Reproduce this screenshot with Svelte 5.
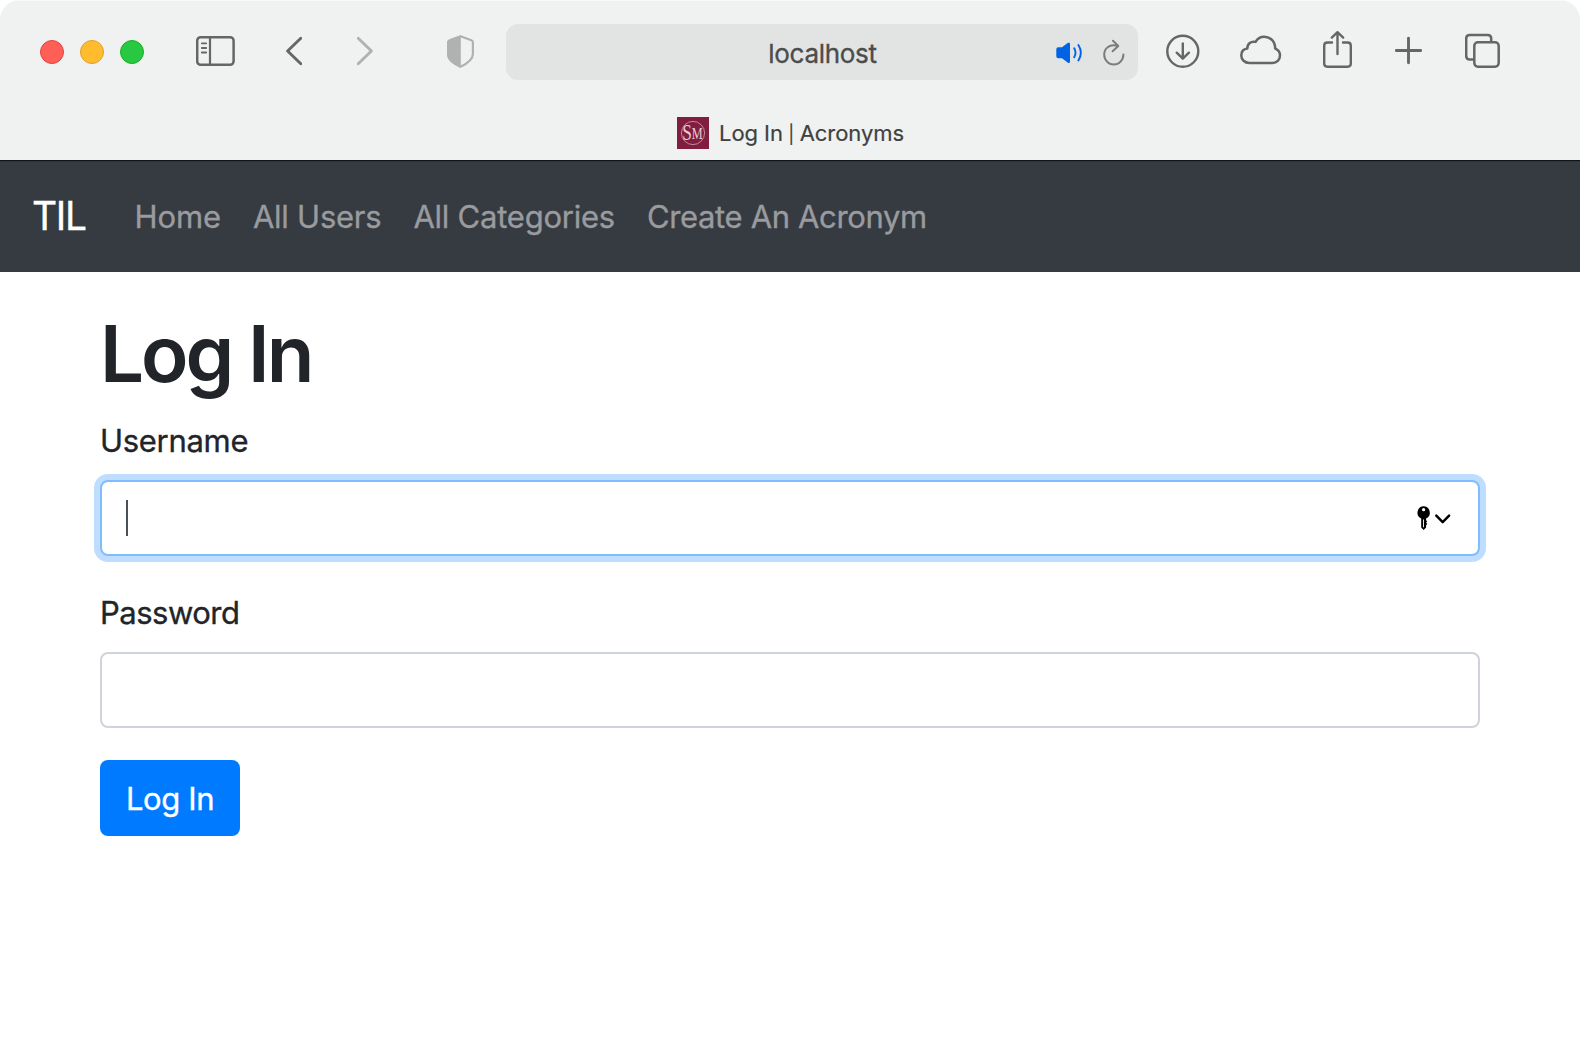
<script>
  const links = [
    { label: 'Home', cls: 'home' },
    { label: 'All Users', cls: 'users' },
    { label: 'All Categories', cls: 'categories' },
    { label: 'Create An Acronym', cls: 'create' }
  ];
</script>

<div class="window">
  <header class="chrome">
    <div class="toolbar">
      <div class="lights">
        <span class="light red"></span>
        <span class="light amber"></span>
        <span class="light green"></span>
      </div>
      <svg class="icon sidebar" width="39" height="48" viewBox="0 0 39 48">
        <rect x="1.2" y="9.2" width="36.4" height="27.6" rx="3.5" stroke-width="2.5" />
        <path d="M14 9v28" stroke-width="2.2" />
        <path d="M5.8 15.3h4.4M5.8 20h4.4M5.8 24.5h4.4" stroke-width="1.8" />
      </svg>
      <svg class="icon back" width="16" height="48" viewBox="0 0 16 48">
        <path d="M14.8 10.3 1.6 23 14.8 35.7" stroke-width="2.9" />
      </svg>
      <svg class="icon forward dim" width="16" height="48" viewBox="0 0 16 48">
        <path d="M1.2 10.3 14.4 23 1.2 35.7" stroke-width="2.9" />
      </svg>
      <svg class="icon shield dim" width="27" height="48" viewBox="0 0 27 48">
        <path d="M13.5 8.2 24.4 12.3Q25.9 12.9 25.9 14.3V26C25.9 32 20 35.7 13.5 38.7 7 35.7 1.1 32 1.1 26V14.3Q1.1 12.9 2.6 12.3Z" stroke-width="2.2" />
        <path class="solid" d="M13.8 7.5 2 12Q0 12.8 0 14.6V26C0 33 7 36.8 13.8 39.8Z" />
      </svg>
      <div class="address">
        <span class="host">localhost</span>
        <div class="address-icons">
          <svg class="speaker" width="27" height="48" viewBox="0 0 27 48">
            <path class="cone" d="M2.3 19.2H6L11.6 14.9Q14 13.5 14 16V33.5Q14 36 11.6 34.6L6 30.3H2.3Q.3 30.3.3 28.3V21.2Q.3 19.2 2.3 19.2Z" />
            <path d="M18.2 20.2Q20.8 24.7 18.2 29.2M22.4 17Q27.3 24.7 22.4 32.4" />
          </svg>
          <svg class="icon reload" width="22" height="48" viewBox="0 0 22 48">
            <path d="M13.2 17.6C6.4 16.1 1.2 20.5 1.2 26.6A9.6 9.9 0 0 0 20.4 26.6M10 12.7 15.3 17.9 9.6 23.2" stroke-width="2" />
          </svg>
        </div>
      </div>
      <svg class="icon download" width="34" height="48" viewBox="0 0 34 48">
        <circle cx="16.8" cy="23.3" r="15.5" stroke-width="2.4" />
        <path d="M16.8 15.5V30.6M10.7 24.7 16.8 30.7 22.9 24.7" stroke-width="2.4" />
      </svg>
      <svg class="icon cloud" width="42" height="48" viewBox="0 0 42 48">
        <path d="M9.3 34.9C4.6 34.9 1.3 31.6 1.3 27.5 1.3 23.7 3.8 21 7.3 20.5 7.3 15.7 11 12.8 15.6 13.9 17.3 10.7 20.3 8.7 24.2 8.7 30.3 8.7 35.2 13.4 35.2 20.6 38.2 21.7 40 24.3 40 27.6 40 31.8 36.8 34.9 32.5 34.9Z" stroke-width="2.5" />
      </svg>
      <svg class="icon share" width="29" height="48" viewBox="0 0 29 48">
        <path d="M9 14.5H4.4Q1.2 14.5 1.2 17.7V35.5Q1.2 38.7 4.4 38.7H24.6Q27.8 38.7 27.8 35.5V17.7Q27.8 14.5 24.6 14.5H20M14.5 26V4.5M8.8 9.6 14.5 4.2 20.2 9.6" stroke-width="2.4" />
      </svg>
      <svg class="icon plus" width="27" height="48" viewBox="0 0 27 48">
        <path d="M13.5 10.3V34.7M1.3 22.5H25.7" stroke-width="2.9" />
      </svg>
      <svg class="icon tabs" width="35" height="48" viewBox="0 0 35 48">
        <path d="M8.5 31.4H4.7Q1.2 31.4 1.2 27.9V10.4Q1.2 6.9 4.7 6.9H22.7Q26.2 6.9 26.2 10.4V13.5" stroke-width="2.5" />
        <rect x="9.3" y="14.3" width="24.4" height="24.4" rx="3.6" stroke-width="2.5" />
      </svg>
    </div>
    <div class="tab">
      <svg class="favicon" width="32" height="32" viewBox="0 0 32 32">
        <rect width="32" height="32" fill="#811d3e" />
        <circle cx="16" cy="16" r="11.6" fill="none" stroke="#c795a5" stroke-width="0.9" />
        <text x="5.2" y="23.3" class="monogram" textLength="20.6" lengthAdjust="spacingAndGlyphs">S<tspan class="small" dy="-1.8">M</tspan></text>
      </svg>
      <span class="tab-title">Log In <span class="bar">|</span> Acronyms</span>
    </div>
  </header>

  <nav class="navbar">
    <a class="brand" href="#top">TIL</a>
    {#each links as link}
      <a class="link {link.cls}" href="#top">{link.label}</a>
    {/each}
  </nav>

  <main class="content">
    <h1>Log In</h1>
    <label class="username-label" for="username">Username</label>
    <div class="field focused" id="username">
      <span class="caret"></span>
      <svg class="autofill" width="34" height="26" viewBox="0 0 34 26">
        <path fill-rule="evenodd" d="M6.6.3A6.4 6.4 0 0 1 9.1 12.5V14.3L10.2 15.4 9.1 16.6 10.2 18 9.1 19.3V21.5L6.6 24 4.2 21.5V12.5A6.4 6.4 0 0 1 6.6.3ZM6.6 2.1A1.6 1.6 0 1 0 6.6 5.3 1.6 1.6 0 0 0 6.6 2.1ZM6.1 13.5V21.3H7V13.5Z" />
        <path class="chevron" d="M19.3 9.7 25.7 16.1 32.1 9.7" />
      </svg>
    </div>
    <label class="password-label" for="password">Password</label>
    <div class="field" id="password"></div>
    <button type="button">Log In</button>
  </main>
</div>

<style>
  :global(body) {
    margin: 0;
    background: #fff;
  }
  .window {
    width: 1580px;
    height: 1054px;
    box-sizing: border-box;
    overflow: hidden;
    border-radius: 20px 20px 0 0;
    background: #fff;
    color: #212529;
    font-family: Inter, "Liberation Sans", sans-serif;
    font-weight: 400;
    -webkit-text-stroke-width: 0.35px;
  }
  .chrome {
    height: 160px;
    background: #f0f2f1;
    box-shadow: inset 0 1px 0 #f8f9f8;
  }
  .toolbar {
    display: flex;
    align-items: center;
    height: 104px;
    padding-left: 40px;
  }
  .toolbar > * {
    flex: none;
  }
  .lights {
    display: flex;
    gap: 16px;
  }
  .light {
    width: 24px;
    height: 24px;
    box-sizing: border-box;
    border-radius: 50%;
  }
  .red { background: #ff5f57; border: 1px solid #e2463f; }
  .amber { background: #febc2e; border: 1px solid #e0a028; }
  .green { background: #28c840; border: 1px solid #1dad2b; }
  .icon {
    fill: none;
    stroke: #656766;
    stroke-linecap: round;
    stroke-linejoin: round;
  }
  .dim { stroke: #b0b2b1; }
  .solid { fill: #b0b2b1; stroke: none; }
  .sidebar { margin-left: 52px; }
  .back { margin-left: 51px; }
  .forward { margin-left: 55px; }
  .shield { margin-left: 74px; }
  .address {
    display: grid;
    grid-template-columns: 82px 1fr 82px;
    align-items: center;
    width: 632px;
    height: 56px;
    margin-left: 32px;
    border-radius: 12px;
    background: #e2e4e3;
  }
  .host {
    grid-column: 2;
    padding: 4px 0 0 1px;
    text-align: center;
    color: #4b4d4c;
    font-size: 26px;
    line-height: 32px;
    letter-spacing: -0.3px;
  }
  .address-icons {
    display: flex;
    gap: 20px;
  }
  .speaker {
    fill: none;
    stroke: #0063e5;
    stroke-width: 1.9;
    stroke-linecap: round;
  }
  .cone { fill: #0063e5; stroke: none; }
  .icon.reload { stroke: #7b7d7c; }
  .download { margin-left: 28px; }
  .cloud { margin-left: 40px; }
  .share { margin-left: 41px; }
  .plus { margin-left: 43px; }
  .tabs { margin-left: 43px; }
  .tab {
    display: flex;
    align-items: center;
    height: 32px;
    padding: 13px 0 0 677px;
  }
  .monogram {
    font-family: "Liberation Serif", serif;
    font-size: 24px;
    fill: #e6ccd5;
    -webkit-text-stroke-width: 0;
  }
  .small { font-size: 17px; }
  .tab-title {
    margin-left: 10px;
    padding-top: 1px;
    color: #3f4140;
    font-size: 22px;
    line-height: 32px;
    letter-spacing: -0.06px;
    white-space: nowrap;
    -webkit-text-stroke-width: 0.2px;
  }
  .bar {
    margin: 0 -0.7px;
    font-size: 18px;
  }
  .navbar {
    display: flex;
    align-items: center;
    height: 112px;
    box-sizing: border-box;
    padding: 1px 32px 0;
    background: #363a41;
    box-shadow: inset 0 1px 0 #10151c, inset 0 2px 0 #2e323a;
  }
  .navbar a {
    text-decoration: none;
    white-space: nowrap;
  }
  .brand {
    width: 54px;
    margin-right: 48.5px;
    padding-bottom: 2px;
    color: #fff;
    font-size: 39px;
    letter-spacing: -1.3px;
  }
  .link {
    margin-right: 32px;
    padding-top: 1px;
    color: #999b9e;
    font-size: 31px;
    line-height: 48px;
  }
  .home { letter-spacing: -0.1px; }
  .users { letter-spacing: -0.25px; }
  .categories { letter-spacing: -0.23px; }
  .create { letter-spacing: -0.36px; }
  .content {
    padding: 32px 100px 0;
  }
  h1 {
    margin: 0 0 16px;
    padding-top: 2px;
    height: 94px;
    font-size: 78px;
    font-weight: 600;
    line-height: 96px;
    letter-spacing: -3px;
    -webkit-text-stroke-width: 0;
  }
  label {
    display: block;
    height: 47px;
    padding-top: 1px;
    margin-bottom: 16px;
    font-size: 31px;
    line-height: 48px;
  }
  .username-label { letter-spacing: -0.3px; }
  .password-label { letter-spacing: -0.5px; }
  .field {
    display: flex;
    align-items: center;
    justify-content: space-between;
    height: 76px;
    box-sizing: border-box;
    margin-bottom: 32px;
    padding: 0 27px 0 24px;
    border: 2px solid #ced4da;
    border-radius: 8px;
    background: #fff;
  }
  .focused {
    border-color: #80bdff;
    box-shadow: 0 0 0 6px #bfdeff;
  }
  .autofill {
    padding-top: 1px;
  }
  .caret {
    width: 2px;
    height: 36px;
    background: #495057;
  }
  .chevron {
    fill: none;
    stroke: #000;
    stroke-width: 2.5;
    stroke-linecap: round;
    stroke-linejoin: round;
  }
  button {
    display: block;
    width: 140px;
    height: 76px;
    padding: 2px 0 0;
    border: 0;
    border-radius: 8px;
    background: #007bff;
    color: #fff;
    font: 400 31px/48px Inter, "Liberation Sans", sans-serif;
    letter-spacing: -0.4px;
  }
</style>
